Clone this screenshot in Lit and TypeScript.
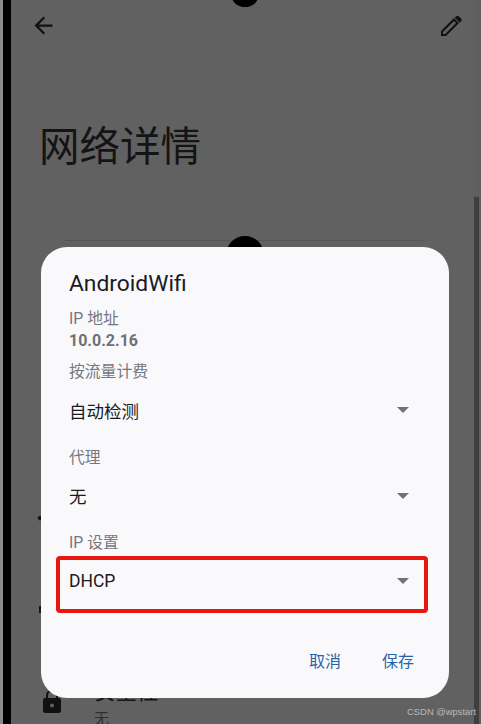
import { LitElement, html, css } from "lit";
import { customElement } from "lit/decorators.js";

@customElement("app-root")
export class AppRoot extends LitElement {
  static styles = css`
    :host {
      display: block;
      width: 481px;
      height: 724px;
      overflow: hidden;
      font-family: "Roboto", "Noto Sans CJK SC", sans-serif;
    }
    .screen {
      position: relative;
      width: 481px;
      height: 724px;
      overflow: hidden;
      background: #5f5f5f;
      display: flex;
    }
    .edge-light { width: 3px; background: #8a8a8a; flex: none; }
    .edge-black { width: 8px; background: #000; flex: none; }
    .page {
      flex: 1;
      min-width: 0;
      display: flex;
      flex-direction: column;
      background: #616161;
    }
    .right-rail {
      width: 7px;
      flex: none;
      display: flex;
      flex-direction: column;
      background: #5f5f5f;
    }
    .rail-top { height: 197px; }
    .rail-bar { flex: 1; background: #3e3e3e; width: 5px; }
    .toolbar {
      display: flex;
      justify-content: space-between;
      align-items: center;
      height: 50px;
      padding: 0 12px 0 18.5px;
      flex: none;
    }
    .toolbar svg { display: block; }
    h1 {
      margin: 75px 0 0 28px;
      font-size: 40.5px;
      line-height: 44px;
      font-weight: 400;
      color: #141414;
    }
    .notch {
      position: absolute;
      left: 232px;
      top: -14px;
      width: 26px;
      height: 21px;
      border-radius: 50%;
      background: #000;
    }
    .avatar {
      position: absolute;
      left: 226px;
      top: 236px;
      width: 38px;
      height: 38px;
      border-radius: 50%;
      background: #000;
    }
    .rule {
      position: absolute;
      left: 64px;
      top: 240px;
      width: 360px;
      height: 1px;
      background: #555;
    }
    .peek {
      position: absolute;
      background: #161616;
    }
    .peek-a { left: 38px; top: 516px; width: 4px; height: 4px; transform: rotate(45deg); }
    .peek-b { left: 39px; top: 606px; width: 2px; height: 7px; }
    .lock { position: absolute; left: 42px; top: 689px; }
    .bg-title {
      position: absolute;
      left: 94px;
      top: 680px;
      font-size: 21.5px;
      line-height: 24px;
      color: #141414;
    }
    .bg-sub {
      position: absolute;
      left: 94px;
      top: 708px;
      font-size: 15px;
      line-height: 22px;
      color: #2e2e2e;
    }
    .dialog {
      position: absolute;
      left: 41px;
      top: 247px;
      width: 408px;
      height: 451px;
      box-sizing: border-box;
      background: #f9f9fc;
      border-radius: 26px;
      padding: 22px 35px 0 28px;
      display: flex;
      flex-direction: column;
    }
    .title {
      font-size: 22.8px;
      line-height: 29px;
      color: #1b1b1f;
      height: 30px;
    }
    .label {
      font-size: 15.8px;
      line-height: 22px;
      color: #75777c;
    }
    .ip-label { margin-top: 9px; }
    .value {
      font-size: 16px;
      line-height: 21px;
      font-weight: 700;
      color: #6e7074;
    }
    .meter-label { margin-top: 10px; }
    .select {
      display: flex;
      align-items: center;
      justify-content: space-between;
      height: 54px;
      font-size: 17.5px;
      color: #1b1b1f;
    }
    .gap-label { margin-top: 9.7px; }
    .arrow {
      width: 0;
      height: 0;
      border-left: 6px solid transparent;
      border-right: 6px solid transparent;
      border-top: 6px solid #707276;
      margin-right: 5px;
    }
    .actions {
      margin-top: 41.6px;
      display: flex;
      justify-content: flex-end;
      gap: 41px;
      font-size: 16px;
      line-height: 24px;
      color: #2a62a8;
    }
    .redbox {
      position: absolute;
      left: 56px;
      top: 556px;
      width: 372px;
      height: 57px;
      box-sizing: border-box;
      border: 4px solid #e5170e;
      border-radius: 4px;
    }
    .mark {
      position: absolute;
      right: 5px;
      top: 705px;
      font-family: "Liberation Sans", sans-serif;
      font-size: 9.4px;
      line-height: 14px;
      color: #b9b9b9;
    }
  `;

  render() {
    return html`
      <div class="screen">
        <div class="edge-light"></div>
        <div class="edge-black"></div>
        <div class="page">
          <div class="toolbar">
            <svg width="27" height="27" viewBox="0 0 24 24" fill="#111">
              <path d="M20 11H7.830l5.590-5.590L12 4l-8 8 8 8 1.410-1.410L7.830 13H20v-2z" />
            </svg>
            <svg width="21" height="21" viewBox="0 0 21 21" fill="#111">
              <path fill-rule="evenodd" d="M0 21v-5L13 3l5 5L5 21zM2 19h2.200L15 8l-2-2L2 17z" />
              <path d="M15 1.500a2.200 2.200 0 0 1 3 0l2 2a2.200 2.200 0 0 1 0 3l-1.200 1.200-5-5z" />
            </svg>
          </div>
          <h1>网络详情</h1>
        </div>
        <div class="right-rail">
          <div class="rail-top"></div>
          <div class="rail-bar"></div>
        </div>

        <div class="notch"></div>
        <div class="rule"></div>
        <div class="avatar"></div>
        <div class="peek peek-a"></div>
        <div class="peek peek-b"></div>
        <svg class="lock" width="20" height="26" viewBox="0 0 20 26" fill="#111">
          <path d="M17 9h-1V6.500a6 6 0 0 0-12 0V9H3a2 2 0 0 0-2 2v11a2 2 0 0 0 2 2h14a2 2 0 0 0 2-2V11a2 2 0 0 0-2-2zM6 6.500a4 4 0 0 1 8 0V9H6V6.500zM10 18.500a2 2 0 1 1 0-4 2 2 0 0 1 0 4z" />
        </svg>
        <div class="bg-title">安全性</div>
        <div class="bg-sub">无</div>

        <div class="dialog">
          <div class="title">AndroidWifi</div>
          <div class="label ip-label">IP 地址</div>
          <div class="value">10.0.2.16</div>
          <div class="label meter-label">按流量计费</div>
          <div class="select"><span>自动检测</span><span class="arrow"></span></div>
          <div class="label gap-label">代理</div>
          <div class="select"><span>无</span><span class="arrow"></span></div>
          <div class="label gap-label">IP 设置</div>
          <div class="select"><span>DHCP</span><span class="arrow"></span></div>
          <div class="actions"><span>取消</span><span>保存</span></div>
        </div>
        <div class="redbox"></div>
        <div class="mark">CSDN @wpstart</div>
      </div>
    `;
  }
}
